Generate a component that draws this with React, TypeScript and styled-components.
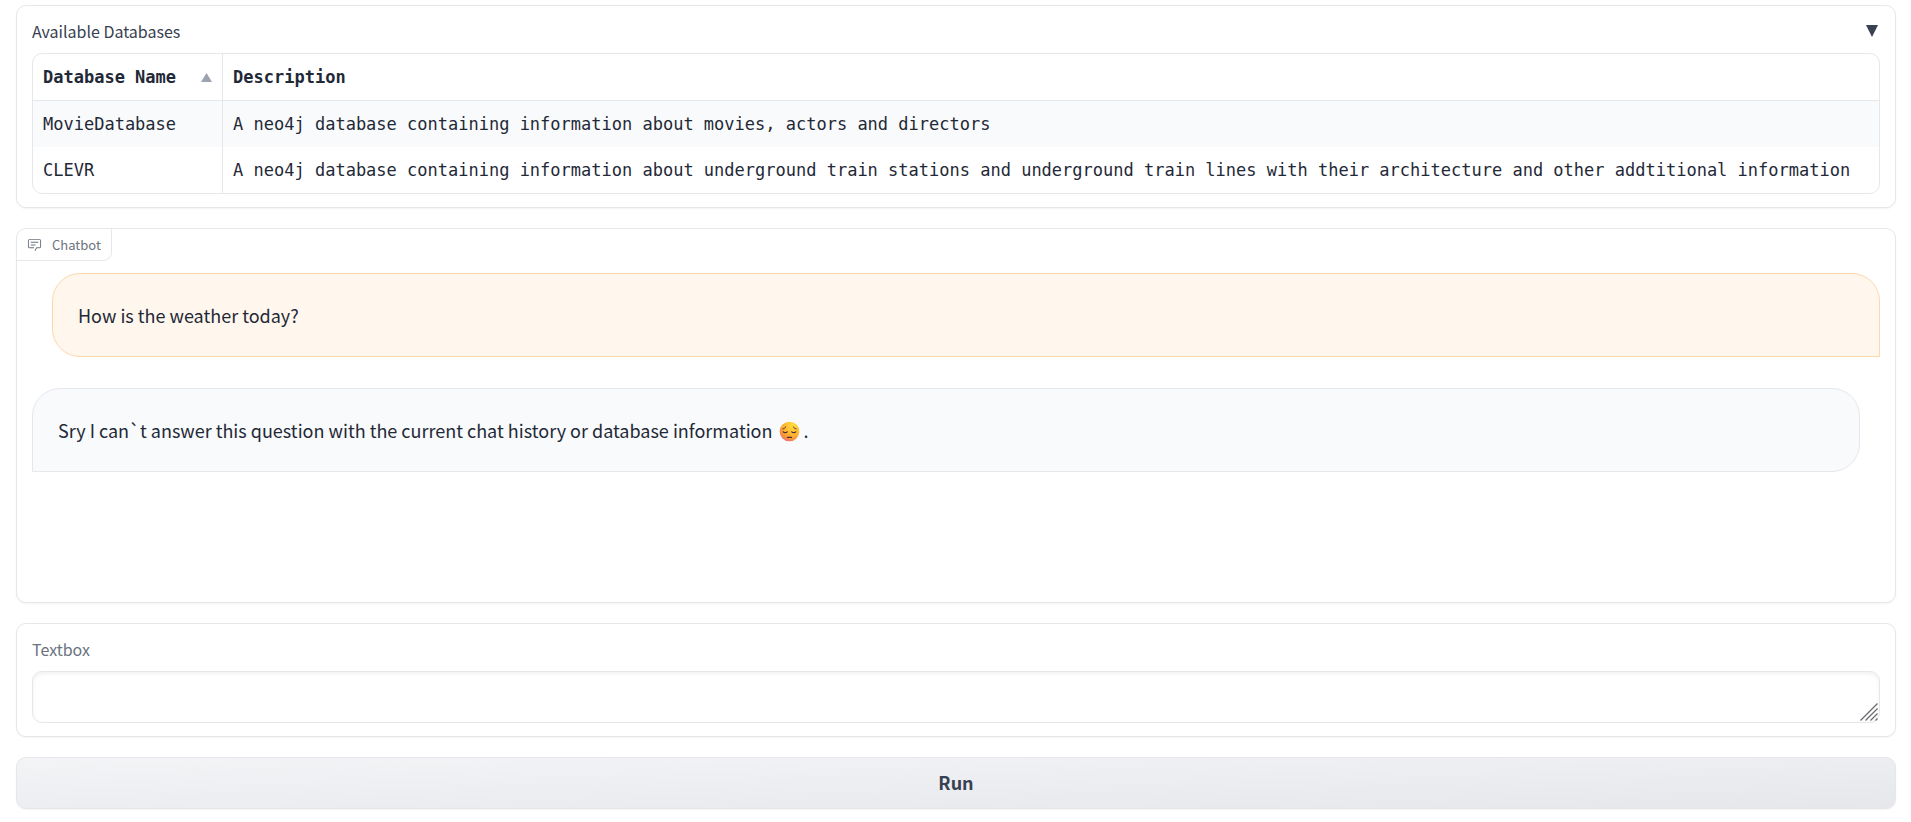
import React, { useState } from "react";
import styled, { createGlobalStyle } from "styled-components";

const sans = `"Noto Sans CJK SC", "Noto Sans", sans-serif`;
const mono = `"DejaVu Sans Mono", monospace`;

const GlobalStyle = createGlobalStyle`
  *, *::before, *::after { box-sizing: border-box; }
  body {
    margin: 0;
    background: #ffffff;
    color: #1f2937;
    font-family: ${sans};
  }
`;

const Page = styled.main`
  display: flex;
  flex-direction: column;
  gap: 20px;
  padding: 5px 15px 12px 16px;
`;

const Panel = styled.section<{ $padded?: boolean }>`
  border: 1px solid #e5e7eb;
  border-radius: 10px;
  background: #ffffff;
  box-shadow: 0 1px 2px rgba(0, 0, 0, 0.05);
  padding: ${(p) => (p.$padded ? "15px 15px 13px" : "0")};
`;

const AccordionButton = styled.button`
  display: flex;
  align-items: center;
  justify-content: space-between;
  width: 100%;
  padding: 0;
  border: 0;
  background: none;
  color: #374151;
  font-family: ${sans};
  font-size: 16px;
  line-height: 20px;
  cursor: pointer;
`;

const Caret = styled.svg<{ $open: boolean }>`
  width: 12px;
  height: 12px;
  margin-right: 2px;
  transform: rotate(${(p) => (p.$open ? "0deg" : "90deg")});
`;

const TableFrame = styled.div`
  margin-top: 12px;
  border: 1px solid #e5e7eb;
  border-radius: 10px;
  overflow: hidden;
`;

const Table = styled.table`
  width: 100%;
  border-collapse: separate;
  border-spacing: 0;
  color: #1f2937;
  font-family: ${mono};
  font-size: 17px;
  line-height: 26px;
  white-space: nowrap;

  th, td {
    padding: 10px;
    text-align: left;
  }
  th {
    border-bottom: 1px solid #e5e7eb;
    font-weight: 700;
  }
  th + th, td + td {
    width: 100%;
    max-width: 0;
    border-left: 1px solid #e5e7eb;
  }
  tbody tr:nth-child(odd) { background: #f9fafb; }
`;

const HeaderCell = styled.div`
  display: flex;
  align-items: center;
  justify-content: space-between;
  gap: 25px;
`;

const SortIcon = styled.svg`
  flex: none;
  width: 11px;
  height: 9px;
`;

const BlockLabel = styled.div`
  display: inline-flex;
  align-items: center;
  gap: 10px;
  height: 32px;
  padding: 0 10px;
  border: solid #e5e7eb;
  border-width: 0 1px 1px 0;
  border-radius: 9px 0 9px 0;
  color: #6b7280;
  font-size: 13px;
  line-height: 20px;
  vertical-align: top;

  svg { width: 15px; height: 15px; }
`;

const Messages = styled.div`
  display: flex;
  flex-direction: column;
  gap: 31px;
  min-height: 341px;
  padding: 12px 15px;
`;

const Bubble = styled.div<{ $from: "user" | "bot" }>`
  padding: 28px 25px;
  border: 1px solid ${(p) => (p.$from === "user" ? "#fed7aa" : "#e5e7eb")};
  border-radius: ${(p) => (p.$from === "user" ? "28px 28px 0 28px" : "28px 28px 28px 0")};
  margin: ${(p) => (p.$from === "user" ? "0 0 0 20px" : "0 20px 0 0")};
  background: ${(p) => (p.$from === "user" ? "#fff7ed" : "#f9fafb")};
  font-size: 18px;
  line-height: 26px;
`;

const Emoji = styled.svg`
  width: 21px;
  height: 21px;
  margin: 0 4px 0 2px;
  vertical-align: -4px;
`;

const FieldLabel = styled.label`
  display: block;
  color: #6b7280;
  font-size: 16px;
  line-height: 20px;
`;

const FieldFrame = styled.div`
  position: relative;
  display: flex;
  margin-top: 12px;
`;

const TextArea = styled.textarea`
  width: 100%;
  height: 52px;
  padding: 12px;
  border: 1px solid #e5e7eb;
  border-radius: 10px;
  outline: none;
  background: #ffffff;
  box-shadow: inset 0 2px 4px rgba(0, 0, 0, 0.06);
  color: #1f2937;
  font-family: ${sans};
  font-size: 18px;
  line-height: 26px;
  resize: vertical;

  &::-webkit-resizer { background: transparent; }
`;

const Grip = styled.svg`
  position: absolute;
  right: 2px;
  bottom: 2px;
  width: 18px;
  height: 18px;
  pointer-events: none;
`;

const RunButton = styled.button`
  height: 52px;
  padding: 0 0 2px;
  border: 1px solid #e5e7eb;
  border-radius: 10px;
  background: linear-gradient(to bottom right, #f3f4f6, #e5e7eb);
  box-shadow: 0 1px 2px rgba(0, 0, 0, 0.05);
  color: #374151;
  font-family: ${sans};
  font-size: 18px;
  font-weight: 700;
  line-height: 26px;
  cursor: pointer;
`;

const databases = [
  {
    name: "MovieDatabase",
    description: "A neo4j database containing information about movies, actors and directors",
  },
  {
    name: "CLEVR",
    description:
      "A neo4j database containing information about underground train stations and underground train lines with their architecture and other addtitional information",
  },
];

function ChatIcon() {
  return (
    <svg viewBox="0 0 32 32" fill="currentColor" aria-hidden="true">
      <path d="M17.74 30L16 29l4-7h6a2 2 0 0 0 2-2V8a2 2 0 0 0-2-2H6a2 2 0 0 0-2 2v12a2 2 0 0 0 2 2h9v2H6a4 4 0 0 1-4-4V8a4 4 0 0 1 4-4h20a4 4 0 0 1 4 4v12a4 4 0 0 1-4 4h-4.84Z" />
      <path d="M8 10h16v2H8zm0 6h10v2H8z" />
    </svg>
  );
}

function PensiveFace() {
  return (
    <Emoji viewBox="0 0 32 32" role="img" aria-label="pensive face">
      <defs>
        <radialGradient id="face" cx="0.68" cy="0.2" r="0.9">
          <stop offset="0" stopColor="#ffdf3e" />
          <stop offset="0.5" stopColor="#ffb82e" />
          <stop offset="0.8" stopColor="#f68f3c" />
          <stop offset="1" stopColor="#f0609a" />
        </radialGradient>
      </defs>
      <circle cx="16" cy="16" r="15" fill="url(#face)" />
      <g fill="none" stroke="#4b2b3c" strokeLinecap="round">
        <path d="M6 12c2 0 3.500-1.500 4-3M26 12c-2 0-3.500-1.500-4-3" strokeWidth="1.500" />
        <path d="M6.500 16.500c1.500 1.800 4.500 1.800 6 0M19.500 16.500c1.500 1.800 4.500 1.800 6 0" strokeWidth="1.900" />
        <path d="M13 25h6" strokeWidth="2" />
      </g>
    </Emoji>
  );
}

export default function App() {
  const [open, setOpen] = useState(true);
  const [text, setText] = useState("");

  return (
    <>
      <GlobalStyle />
      <Page>
        <Panel $padded>
          <AccordionButton type="button" aria-expanded={open} onClick={() => setOpen(!open)}>
            <span>Available Databases</span>
            <Caret $open={open} viewBox="0 0 12 12" aria-hidden="true">
              <path d="M0 0h12L6 12z" fill="#374151" />
            </Caret>
          </AccordionButton>
          {open && (
            <TableFrame>
              <Table>
                <thead>
                  <tr>
                    <th scope="col">
                      <HeaderCell>
                        Database Name
                        <SortIcon viewBox="0 0 11 9" aria-hidden="true">
                          <path d="M5.500 0L11 9H0z" fill="#9ca3af" />
                        </SortIcon>
                      </HeaderCell>
                    </th>
                    <th scope="col">Description</th>
                  </tr>
                </thead>
                <tbody>
                  {databases.map((db) => (
                    <tr key={db.name}>
                      <td>{db.name}</td>
                      <td>{db.description}</td>
                    </tr>
                  ))}
                </tbody>
              </Table>
            </TableFrame>
          )}
        </Panel>

        <Panel>
          <BlockLabel>
            <ChatIcon />
            Chatbot
          </BlockLabel>
          <Messages>
            <Bubble $from="user">How is the weather today?</Bubble>
            <Bubble $from="bot">
              Sry I can`t answer this question with the current chat history or database information <PensiveFace />.
            </Bubble>
          </Messages>
        </Panel>

        <Panel $padded>
          <FieldLabel htmlFor="prompt">Textbox</FieldLabel>
          <FieldFrame>
            <TextArea id="prompt" rows={1} value={text} onChange={(e) => setText(e.target.value)} />
            <Grip viewBox="0 0 18 18" aria-hidden="true">
              <path
                d="M0.500 17.500L17.500 0.500M5.500 17.500L17.500 5.500M10.500 17.500L17.500 10.500M15.500 17.500L17.500 15.500"
                stroke="#6b6b70"
                strokeWidth="1.300"
              />
            </Grip>
          </FieldFrame>
        </Panel>

        <RunButton type="button">Run</RunButton>
      </Page>
    </>
  );
}
